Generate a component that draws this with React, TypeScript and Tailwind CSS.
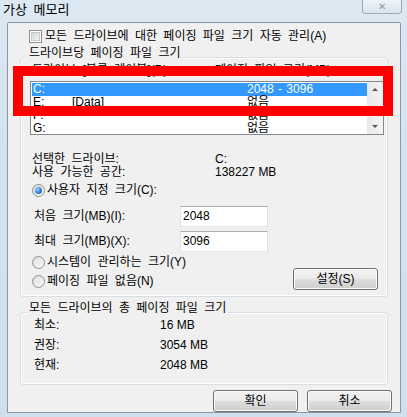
import React from 'react';

const btnBg =
  'bg-[linear-gradient(to_bottom,#f2f2f2_0%,#ebebeb_48%,#dddddd_52%,#cfcfcf_100%)]';

const Checkbox = () => (
  <span className="w-[13px] h-[13px] border border-[#8f8f8f] p-[1px] bg-white shrink-0">
    <span className="block w-full h-full border border-[#c9c9c9] bg-[linear-gradient(135deg,#d6d6d6,#f4f4f4)]" />
  </span>
);

const Radio = ({ checked }: { checked?: boolean }) => (
  <span className="w-[13px] h-[13px] rounded-full border border-[#8f8f8f] bg-[linear-gradient(135deg,#dcdcdc,#fafafa)] flex items-center justify-center shrink-0">
    {checked && (
      <span className="w-[7px] h-[7px] rounded-full bg-[radial-gradient(circle_at_35%_35%,#9fd3ff_0%,#2c7fd8_55%,#0f4f9e_100%)]" />
    )}
  </span>
);

const Button = ({ label, className }: { label: string; className?: string }) => (
  <div
    className={`h-[22px] w-[85px] rounded-[3px] border border-[#707070] ${btnBg} shadow-[inset_0_0_0_1px_#fbfbfb] flex items-center justify-center ${className ?? ''}`}
  >
    {label}
  </div>
);

const Input = ({ value }: { value: string }) => (
  <div className="w-[88px] h-[21px] border border-[#abadb3] border-l-[#e2e3ea] border-r-[#dbdfe6] border-b-[#e3e9ef] bg-white pl-[2px] flex items-center">
    {value}
  </div>
);

const rows = [
  { drive: 'C:', label: '', size: '2048 - 3096', selected: true },
  { drive: 'E:', label: '[Data]', size: '없음' },
  { drive: 'F:', label: '', size: '없음' },
  { drive: 'G:', label: '', size: '없음' },
];

export default function App() {
  return (
    <div className="relative w-[407px] h-[417px] overflow-hidden bg-[linear-gradient(to_bottom,#dce8f2_0%,#d3e2ee_40%,#cfe0ec_100%)] text-[12px] leading-[13px] [word-spacing:3px] text-black font-['Liberation_Sans','Noto_Sans_CJK_KR',sans-serif]">
      {/* 제목 표시줄 */}
      <div className="h-[22px] flex items-start justify-between">
        <span className="ml-[3px] mt-[2px] text-[13px] leading-[15px]">가상 메모리</span>
        <div className="mr-[5px] w-[40px] h-[14px] rounded-b-[4px] border border-t-0 border-[#9aabbd] bg-[linear-gradient(to_bottom,#eef3f8,#d9e4ee)] flex items-center justify-center text-[#8d9aa7] text-[10px] leading-none">
          ✕
        </div>
      </div>

      {/* 본문 */}
      <div className="ml-[7px] w-[394px] h-[391px] border border-[#8a98a6] rounded-t-[2px] bg-[#f0f0f0] flex flex-col">
        <div className="mt-[7px] ml-[21px] flex items-center gap-[3px] h-[13px]">
          <Checkbox />
          <span>모든 드라이브에 대한 페이징 파일 크기 자동 관리(A)</span>
        </div>

        {/* 드라이브당 페이징 파일 크기 */}
        <div className="mt-[14px] ml-[12px] w-[368px] h-[240px] border border-[#d5dfe5] rounded-[3px] shadow-[inset_0_0_0_1px_#ffffff] flex flex-col">
          <span className="-mt-[12px] ml-[6px] px-[2px] w-fit leading-[14px] bg-[#f0f0f0]">
            드라이브당 페이징 파일 크기
          </span>
          <div className="mt-[3px] pl-[11px] flex leading-[14px]">
            <span className="w-[183px]">드라이브 [볼륨 레이블](D)</span>
            <span>페이징 파일 크기(MB)</span>
          </div>

          <div className="mt-[4px] ml-[9px] w-[354px] h-[54px] border border-[#828790] bg-white flex">
            <div className="flex-1 flex flex-col pt-[1px] pl-[1px]">
              {rows.map((r) => (
                <div
                  key={r.drive}
                  className={`h-[13px] flex items-center pl-[1px] ${r.selected ? 'bg-[#3399ff] text-white' : ''}`}
                >
                  <span className="w-[39px]">{r.drive}</span>
                  <span className="w-[175px]">{r.label}</span>
                  <span className="[word-spacing:1px]">{r.size}</span>
                </div>
              ))}
            </div>
            <div className="w-[16px] bg-[linear-gradient(to_right,#e8e8e8,#f4f4f4)] flex flex-col justify-between items-center py-[6px]">
              <span className="w-0 h-0 border-l-[3px] border-r-[3px] border-b-[3px] border-l-transparent border-r-transparent border-b-[#555]" />
              <span className="w-0 h-0 border-l-[3px] border-r-[3px] border-t-[3px] border-l-transparent border-r-transparent border-t-[#555]" />
            </div>
          </div>

          <div className="mt-[18px] pl-[11px] flex">
            <span className="w-[183px]">선택한 드라이브:</span>
            <span>C:</span>
          </div>
          <div className="pl-[11px] flex">
            <span className="w-[183px]">사용 가능한 공간:</span>
            <span className="[word-spacing:0px]">138227 MB</span>
          </div>

          <div className="mt-[5px] pl-[11px] flex items-center gap-[2px] h-[13px]">
            <Radio checked />
            <span>사용자 지정 크기(C):</span>
          </div>

          <div className="mt-[9px] pl-[13px] flex items-center h-[21px]">
            <span className="w-[146px]">처음 크기(MB)(I):</span>
            <Input value="2048" />
          </div>
          <div className="mt-[4px] pl-[13px] flex items-center h-[21px]">
            <span className="w-[146px]">최대 크기(MB)(X):</span>
            <Input value="3096" />
          </div>

          <div className="mt-[4px] flex">
            <div className="pl-[11px] flex flex-col gap-[6px]">
              <div className="flex items-center gap-[2px] h-[13px]">
                <Radio />
                <span>시스템이 관리하는 크기(Y)</span>
              </div>
              <div className="flex items-center gap-[2px] h-[13px]">
                <Radio />
                <span>페이징 파일 없음(N)</span>
              </div>
            </div>
            <Button label="설정(S)" className="ml-auto mr-[9px] mt-[12px]" />
          </div>
        </div>

        {/* 모든 드라이브의 총 페이징 파일 크기 */}
        <div className="mt-[15px] ml-[12px] w-[368px] h-[73px] border border-[#d5dfe5] rounded-[3px] shadow-[inset_0_0_0_1px_#ffffff] flex flex-col">
          <span className="-mt-[12px] ml-[6px] px-[2px] w-fit leading-[14px] bg-[#f0f0f0]">
            모든 드라이브의 총 페이징 파일 크기
          </span>
          {[
            ['최소:', '16 MB'],
            ['권장:', '3054 MB'],
            ['현재:', '2048 MB'],
          ].map(([k, v]) => (
            <div key={k} className="pl-[13px] flex leading-[20px]">
              <span className="w-[126px]">{k}</span>
              <span className="[word-spacing:0px]">{v}</span>
            </div>
          ))}
        </div>

        <div className="mt-[5px] pr-[8px] flex justify-end gap-[9px]">
          <Button label="확인" />
          <Button label="취소" />
        </div>
      </div>

      {/* 강조 표시 */}
      <div className="absolute left-[13px] top-[66px] w-[380px] h-[50px] border-[10px] border-[#ff0000]" />
    </div>
  );
}
